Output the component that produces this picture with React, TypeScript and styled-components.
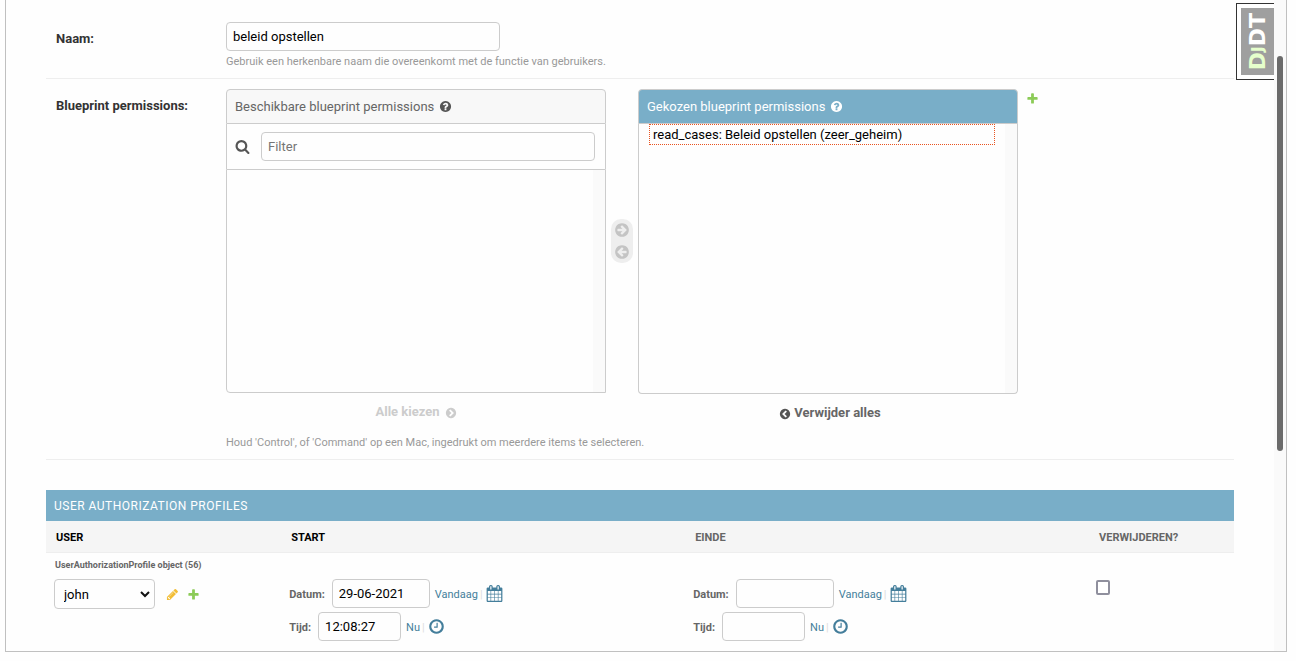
import React from "react";
import styled, { createGlobalStyle } from "styled-components";

const GlobalStyle = createGlobalStyle`
  *, *::before, *::after { box-sizing: border-box; }
  body {
    margin: 0;
    background: #fefefe;
    color: #333;
    font-family: Roboto, "Liberation Sans", sans-serif;
    font-size: 13px;
    line-height: 16px;
  }
`;

const RING =
  "q0 209-103 385.5t-279.5 279.5-385.5 103-385.5-103-279.5-279.5-103-385.5 103-385.5 279.5-279.5 385.5-103 385.5 103 279.5 279.5 103 385.5z";

const ICONS = {
  search:
    "M1216 832q0-185-131.5-316.5t-316.5-131.5-316.5 131.5-131.5 316.5 131.5 316.5 316.5 131.5 316.5-131.5 131.5-316.5zm512 832q0 52-38 90t-90 38q-54 0-90-38l-343-342q-179 124-399 124-143 0-273.5-55.5t-225-150-150-225-55.5-273.5 55.5-273.5 150-225 225-150 273.5-55.5 273.5 55.5 225 150 150 225 55.5 273.5q0 220-124 399l343 343q37 37 37 90z",
  calendar:
    "M192 1664h288v-288h-288v288zm352 0h320v-288h-320v288zm-352-352h288v-320h-288v320zm352 0h320v-320h-320v320zm-352-384h288v-288h-288v288zm736 736h320v-288h-320v288zm-384-736h320v-288h-320v288zm768 736h288v-288h-288v288zm-384-352h320v-320h-320v320zm-352-864v-288q0-13-9.5-22.5t-22.5-9.5h-64q-13 0-22.5 9.5t-9.5 22.5v288q0 13 9.5 22.5t22.5 9.5h64q13 0 22.5-9.5t9.5-22.5zm736 864h288v-320h-288v320zm-384-384h320v-288h-320v288zm384 0h288v-288h-288v288zm32-480v-288q0-13-9.5-22.5t-22.5-9.5h-64q-13 0-22.5 9.5t-9.5 22.5v288q0 13 9.5 22.5t22.5 9.5h64q13 0 22.5-9.5t9.5-22.5zm384-64v1280q0 52-38 90t-90 38h-1408q-52 0-90-38t-38-90v-1280q0-52 38-90t90-38h128v-96q0-66 47-113t113-47h64q66 0 113 47t47 113v96h384v-96q0-66 47-113t113-47h64q66 0 113 47t47 113v96h128q52 0 90 38t38 90z",
  clock:
    "M1024 544v448q0 14-9 23t-23 9h-320q-14 0-23-9t-9-23v-64q0-14 9-23t23-9h224v-352q0-14 9-23t23-9h64q14 0 23 9t9 23zm416 352q0-148-73-273t-198-198-273-73-273 73-198 198-73 273 73 273 198 198 273 73 273-73 198-198 73-273zm224 0" + RING,
  plus:
    "M1600 796v192q0 40-28 68t-68 28h-416v416q0 40-28 68t-68 28h-192q-40 0-68-28t-28-68v-416h-416q-40 0-68-28t-28-68v-192q0-40 28-68t68-28h416v-416q0-40 28-68t68-28h192q40 0 68 28t28 68v416h416q40 0 68 28t28 68z",
  pencil:
    "M491 1536l91-91-235-235-91 91v107h128v128h107zm523-928q0-22-22-22-10 0-17 7l-542 542q-7 7-7 17 0 22 22 22 10 0 17-7l542-542q7-7 7-17zm-54-192l416 416-832 832h-416v-416zm683 96q0 53-37 90l-166 166-416-416 166-165q36-38 90-38 53 0 91 38l235 234q37 39 37 91z",
  help:
    "M1024 1376v-192q0-14-9-23t-23-9h-192q-14 0-23 9t-9 23v192q0 14 9 23t23 9h192q14 0 23-9t9-23zm256-672q0-88-55.5-163t-138.5-116-170-41q-243 0-371 213-15 24 8 42l132 100q7 6 19 6 16 0 25-12 53-68 86-92 34-24 86-24 48 0 85.5 26t37.5 59q0 38-20 61t-68 45q-63 28-115.5 86.5t-52.5 125.5v36q0 14 9 23t23 9h192q14 0 23-9t9-23q0-19 21.5-49.5t54.5-49.5q32-18 49-28.5t46-35 44.5-48 28-60.5 12.5-81zm384 192" + RING,
  arrow:
    "M1413 896q0-27-18-45l-91-91-362-362q-18-18-45-18t-45 18l-91 91q-18 18-18 45t18 45l189 189h-502q-26 0-45 19t-19 45v128q0 26 19 45t45 19h502l-189 189q-19 19-19 45t19 45l91 91q18 18 45 18t45-18l362-362 91-91q18-18 18-45zm251 0" + RING,
  chevron:
    "M845 1395l454-454q19-19 19-45t-19-45l-454-454q-19-19-45-19t-45 19l-102 102q-19 19-19 45t19 45l307 307-307 307q-19 19-19 45t19 45l102 102q19 19 45 19t45-19zm819-499" + RING,
};

type IconName = keyof typeof ICONS;

const Svg = styled.svg<{ $color: string; $flip?: boolean }>`
  display: block;
  flex: none;
  fill: ${(p) => p.$color};
  transform: ${(p) => (p.$flip ? "scaleX(-1)" : "none")};
`;

function Icon({ name, size, color, flip }: { name: IconName; size: number; color: string; flip?: boolean }) {
  return (
    <Svg width={size} height={size} viewBox="0 0 1792 1792" $color={color} $flip={flip} aria-hidden="true">
      <path d={ICONS[name]} />
    </Svg>
  );
}

const Frame = styled.div`
  display: flex;
  margin: 0 9px 9px 5px;
  border: 1px solid #c0c0c0;
  border-top: 0;
`;

const Content = styled.main`
  position: relative;
  flex: 1;
  min-width: 0;
  padding: 0 40px 10px;
`;

const ScrollTrack = styled.div`
  width: 12px;
  padding: 56px 3px 0;
  background: #fafafa;
`;

const ScrollThumb = styled.div`
  height: 395px;
  border-radius: 3px;
  background: #6b6b6b;
`;

const DebugHandle = styled.button`
  position: absolute;
  top: 3px;
  right: 0;
  width: 38px;
  height: 77px;
  padding: 4px 0 4px 4px;
  border: 1px solid #333;
  border-right: 0;
  background: #fff;
`;

const DebugLogo = styled.span`
  display: flex;
  align-items: center;
  justify-content: center;
  height: 100%;
  background: #9f9f9f;
`;

const DebugText = styled.span`
  writing-mode: vertical-rl;
  transform: rotate(180deg);
  color: #fff;
  font: bold 22px/26px "DejaVu Sans", sans-serif;
`;

const DebugAccent = styled.span<{ $small?: boolean }>`
  color: #e6ffcc;
  font-size: ${(p) => (p.$small ? 15 : 22)}px;
`;

const FormRow = styled.div<{ $top: number }>`
  display: flex;
  align-items: flex-start;
  padding: ${(p) => p.$top}px 10px 9px;
  border-bottom: 1px solid #eee;
`;

const RowLabel = styled.label`
  flex: none;
  width: 170px;
  padding-top: 9px;
  font-weight: 700;
`;

const Field = styled.div`
  min-width: 0;
`;

const TextInput = styled.input<{ $width?: number }>`
  display: block;
  width: ${(p) => (p.$width ? `${p.$width}px` : "100%")};
  height: 29px;
  padding: 0 6px;
  border: 1px solid #ccc;
  border-radius: 4px;
  background: #fefefe;
  color: #000;
  font: 13px Roboto, "Liberation Sans", sans-serif;
  &::placeholder { color: #757575; }
`;

const Help = styled.p<{ $gap: number }>`
  margin: ${(p) => p.$gap}px 0 0;
  color: #999;
  font-size: 11px;
  line-height: 14px;
`;

const Selector = styled.div`
  display: flex;
  align-items: flex-start;
`;

const Panel = styled.section`
  width: 380px;
`;

const PanelTitle = styled.h2<{ $active?: boolean }>`
  display: flex;
  align-items: center;
  gap: 5px;
  height: 35px;
  margin: 0;
  padding: 0 8px;
  border: 1px solid #ccc;
  border-radius: 4px 4px 0 0;
  background: ${(p) => (p.$active ? "#79aec8" : "#f8f8f8")};
  color: ${(p) => (p.$active ? "#fff" : "#666")};
  font-size: 13px;
  font-weight: 400;
`;

const FilterBar = styled.div`
  display: flex;
  align-items: center;
  gap: 11px;
  height: 45px;
  padding: 0 10px 0 8px;
  border: solid #ccc;
  border-width: 0 1px;
`;

const ListBox = styled.select<{ $height: number; $joined?: boolean }>`
  display: block;
  width: 100%;
  height: ${(p) => p.$height}px;
  padding: 0 22px 0 10px;
  border: 1px solid #ccc;
  border-top-width: ${(p) => (p.$joined ? 0 : 1)}px;
  border-radius: ${(p) => (p.$joined ? "0 0 4px 4px" : "0 0 0 4px")};
  outline: 0;
  background: linear-gradient(to left, #fafafa 12px, #fefefe 12px);
  color: #000;
  font: 13px/15px Roboto, "Liberation Sans", sans-serif;
  scrollbar-width: none;
`;

const FocusedOption = styled.option`
  min-height: 21px;
  padding: 2px 3px;
  border: 1px dotted #e95420;
`;

const Chooser = styled.div`
  display: flex;
  flex-direction: column;
  align-items: center;
  justify-content: center;
  gap: 6px;
  width: 22px;
  height: 44px;
  margin: 130px 5px 0;
  border-radius: 10px;
  background: #eee;
`;

const PlainButton = styled.button`
  display: flex;
  align-self: center;
  padding: 0;
  border: 0;
  background: none;
`;

const BulkLink = styled.a<{ $muted?: boolean }>`
  display: flex;
  align-items: center;
  justify-content: center;
  gap: ${(p) => (p.$muted ? 5 : 3)}px;
  margin-top: 11px;
  padding-left: ${(p) => (p.$muted ? 0 : 4)}px;
  color: ${(p) => (p.$muted ? "#ccc" : "#666")};
  font-weight: 700;
  text-decoration: none;
`;

const BulkIcon = styled.span`
  padding-top: 2px;
`;

const AddLink = styled.a`
  margin: 3px 0 0 8px;
`;

const Module = styled.section`
  margin-top: 30px;
`;

const ModuleTitle = styled.h2`
  margin: 0;
  padding: 1px 8px 0;
  background: #79aec8;
  color: #fff;
  font-size: 12px;
  font-weight: 400;
  line-height: 30px;
  letter-spacing: 0.5px;
  text-transform: uppercase;
`;

const Table = styled.table`
  width: 100%;
  border-collapse: separate;
  border-spacing: 0;
  table-layout: fixed;
`;

const HeadCell = styled.th<{ $share: number; $required?: boolean }>`
  width: ${(p) => p.$share}%;
  height: 32px;
  padding: 2px 10px 0;
  border-bottom: 1px solid #eee;
  background: #f5f5f5;
  color: ${(p) => (p.$required ? "#000" : "#666")};
  font-size: 11px;
  font-weight: 700;
  text-align: left;
  text-transform: uppercase;
`;

const Cell = styled.td<{ $top: number }>`
  padding: ${(p) => p.$top}px 8px 0;
  vertical-align: top;
`;

const ObjectName = styled.p`
  margin: 0 0 8px;
  padding-left: 1px;
  color: #666;
  font-size: 9px;
  font-weight: 700;
  line-height: 12px;
`;

const UserLine = styled.div`
  display: flex;
  align-items: center;
`;

const SelectWrap = styled.div`
  position: relative;
  margin-right: 7px;
`;

const UserSelect = styled.select`
  display: block;
  appearance: none;
  width: 101px;
  height: 30px;
  padding: 0 9px;
  border: 1px solid #ccc;
  border-radius: 4px;
  background: #fefefe;
  color: #000;
  font: 13px Roboto, "Liberation Sans", sans-serif;
`;

const SelectCaret = styled.svg`
  position: absolute;
  top: 12px;
  right: 5px;
  fill: none;
  stroke: #111;
  stroke-width: 2;
  pointer-events: none;
`;

const IconLink = styled.a`
  padding: 0 4px;
`;

const TimeLine = styled.div`
  display: flex;
  align-items: baseline;
  margin-bottom: 4px;
  color: #666;
  font-size: 11px;
  &:last-child { margin-bottom: 0; }
`;

const TimeLabel = styled.label`
  margin-right: 7px;
  font-weight: 700;
`;

const Shortcut = styled.a`
  margin-left: 5px;
  color: #447e9b;
  text-decoration: none;
`;

const Divider = styled.span`
  margin: 0 3px 0 2px;
  color: #ddd;
`;

const Check = styled.input`
  appearance: none;
  display: block;
  width: 14px;
  height: 15px;
  margin: 1px 0 0 -1px;
  border: 2px solid #8f8f9d;
  border-radius: 2px;
  background: #fff;
`;

function DateTimeFields({ id, date, time }: { id: string; date: string; time: string }) {
  return (
    <>
      <TimeLine>
        <TimeLabel htmlFor={`${id}-date`}>Datum:</TimeLabel>
        <TextInput id={`${id}-date`} $width={98} defaultValue={date} />
        <Shortcut href="#">Vandaag</Shortcut>
        <Divider>|</Divider>
        <PlainButton type="button" aria-label="Kalender">
          <Icon name="calendar" size={17} color="#447e9b" />
        </PlainButton>
      </TimeLine>
      <TimeLine>
        <TimeLabel htmlFor={`${id}-time`}>Tijd:</TimeLabel>
        <TextInput id={`${id}-time`} $width={83} defaultValue={time} />
        <Shortcut href="#">Nu</Shortcut>
        <Divider>|</Divider>
        <PlainButton type="button" aria-label="Klok">
          <Icon name="clock" size={17} color="#447e9b" />
        </PlainButton>
      </TimeLine>
    </>
  );
}

export default function App() {
  return (
    <>
      <GlobalStyle />
      <Frame>
        <Content>
          <DebugHandle type="button">
            <DebugLogo>
              <DebugText>
                <DebugAccent>D</DebugAccent>
                <DebugAccent $small>J</DebugAccent>
                DT
              </DebugText>
            </DebugLogo>
          </DebugHandle>

          <FormRow $top={22}>
            <RowLabel htmlFor="name">Naam:</RowLabel>
            <Field>
              <TextInput id="name" $width={274} defaultValue="beleid opstellen" />
              <Help $gap={4}>Gebruik een herkenbare naam die overeenkomt met de functie van gebruikers.</Help>
            </Field>
          </FormRow>

          <FormRow $top={10}>
            <RowLabel htmlFor="chosen">Blueprint permissions:</RowLabel>
            <Field>
              <Selector>
                <Panel>
                  <PanelTitle>
                    Beschikbare blueprint permissions
                    <Icon name="help" size={13} color="#555" />
                  </PanelTitle>
                  <FilterBar>
                    <Icon name="search" size={15} color="#555" />
                    <TextInput placeholder="Filter" aria-label="Filter" />
                  </FilterBar>
                  <ListBox multiple $height={224} aria-label="Beschikbare blueprint permissions" />
                  <BulkLink href="#" $muted>
                    Alle kiezen
                    <BulkIcon>
                      <Icon name="chevron" size={12} color="#ccc" />
                    </BulkIcon>
                  </BulkLink>
                </Panel>
                <Chooser>
                  <PlainButton type="button" aria-label="Kiezen">
                    <Icon name="arrow" size={16} color="#c4c4c4" />
                  </PlainButton>
                  <PlainButton type="button" aria-label="Verwijderen">
                    <Icon name="arrow" size={16} color="#c4c4c4" flip />
                  </PlainButton>
                </Chooser>
                <Panel>
                  <PanelTitle $active>
                    Gekozen blueprint permissions
                    <Icon name="help" size={13} color="#fff" />
                  </PanelTitle>
                  <ListBox id="chosen" multiple $height={270} $joined>
                    <FocusedOption>read_cases: Beleid opstellen (zeer_geheim)</FocusedOption>
                  </ListBox>
                  <BulkLink href="#">
                    <BulkIcon>
                      <Icon name="chevron" size={12} color="#555" flip />
                    </BulkIcon>
                    Verwijder alles
                  </BulkLink>
                </Panel>
                <AddLink href="#" aria-label="Toevoegen">
                  <Icon name="plus" size={13} color="#8ccb57" />
                </AddLink>
              </Selector>
              <Help $gap={15}>Houd 'Control', of 'Command' op een Mac, ingedrukt om meerdere items te selecteren.</Help>
            </Field>
          </FormRow>

          <Module>
            <ModuleTitle>User authorization profiles</ModuleTitle>
            <Table>
              <thead>
                <tr>
                  <HeadCell $share={19.8} $required>User</HeadCell>
                  <HeadCell $share={34} $required>Start</HeadCell>
                  <HeadCell $share={34}>Einde</HeadCell>
                  <HeadCell $share={12.2}>Verwijderen?</HeadCell>
                </tr>
              </thead>
              <tbody>
                <tr>
                  <Cell $top={6}>
                    <ObjectName>UserAuthorizationProfile object (56)</ObjectName>
                    <UserLine>
                      <SelectWrap>
                        <UserSelect aria-label="User" defaultValue="john">
                          <option value="john">john</option>
                        </UserSelect>
                        <SelectCaret width="10" height="7" viewBox="0 0 10 7" aria-hidden="true">
                          <path d="M1 1l4 4 4-4" />
                        </SelectCaret>
                      </SelectWrap>
                      <IconLink href="#" aria-label="Wijzigen">
                        <Icon name="pencil" size={13} color="#f2bd35" />
                      </IconLink>
                      <IconLink href="#" aria-label="Toevoegen">
                        <Icon name="plus" size={13} color="#8ccb57" />
                      </IconLink>
                    </UserLine>
                  </Cell>
                  <Cell $top={26}>
                    <DateTimeFields id="start" date="29-06-2021" time="12:08:27" />
                  </Cell>
                  <Cell $top={26}>
                    <DateTimeFields id="end" date="" time="" />
                  </Cell>
                  <Cell $top={26}>
                    <Check type="checkbox" aria-label="Verwijderen?" />
                  </Cell>
                </tr>
              </tbody>
            </Table>
          </Module>
        </Content>
        <ScrollTrack>
          <ScrollThumb />
        </ScrollTrack>
      </Frame>
    </>
  );
}
